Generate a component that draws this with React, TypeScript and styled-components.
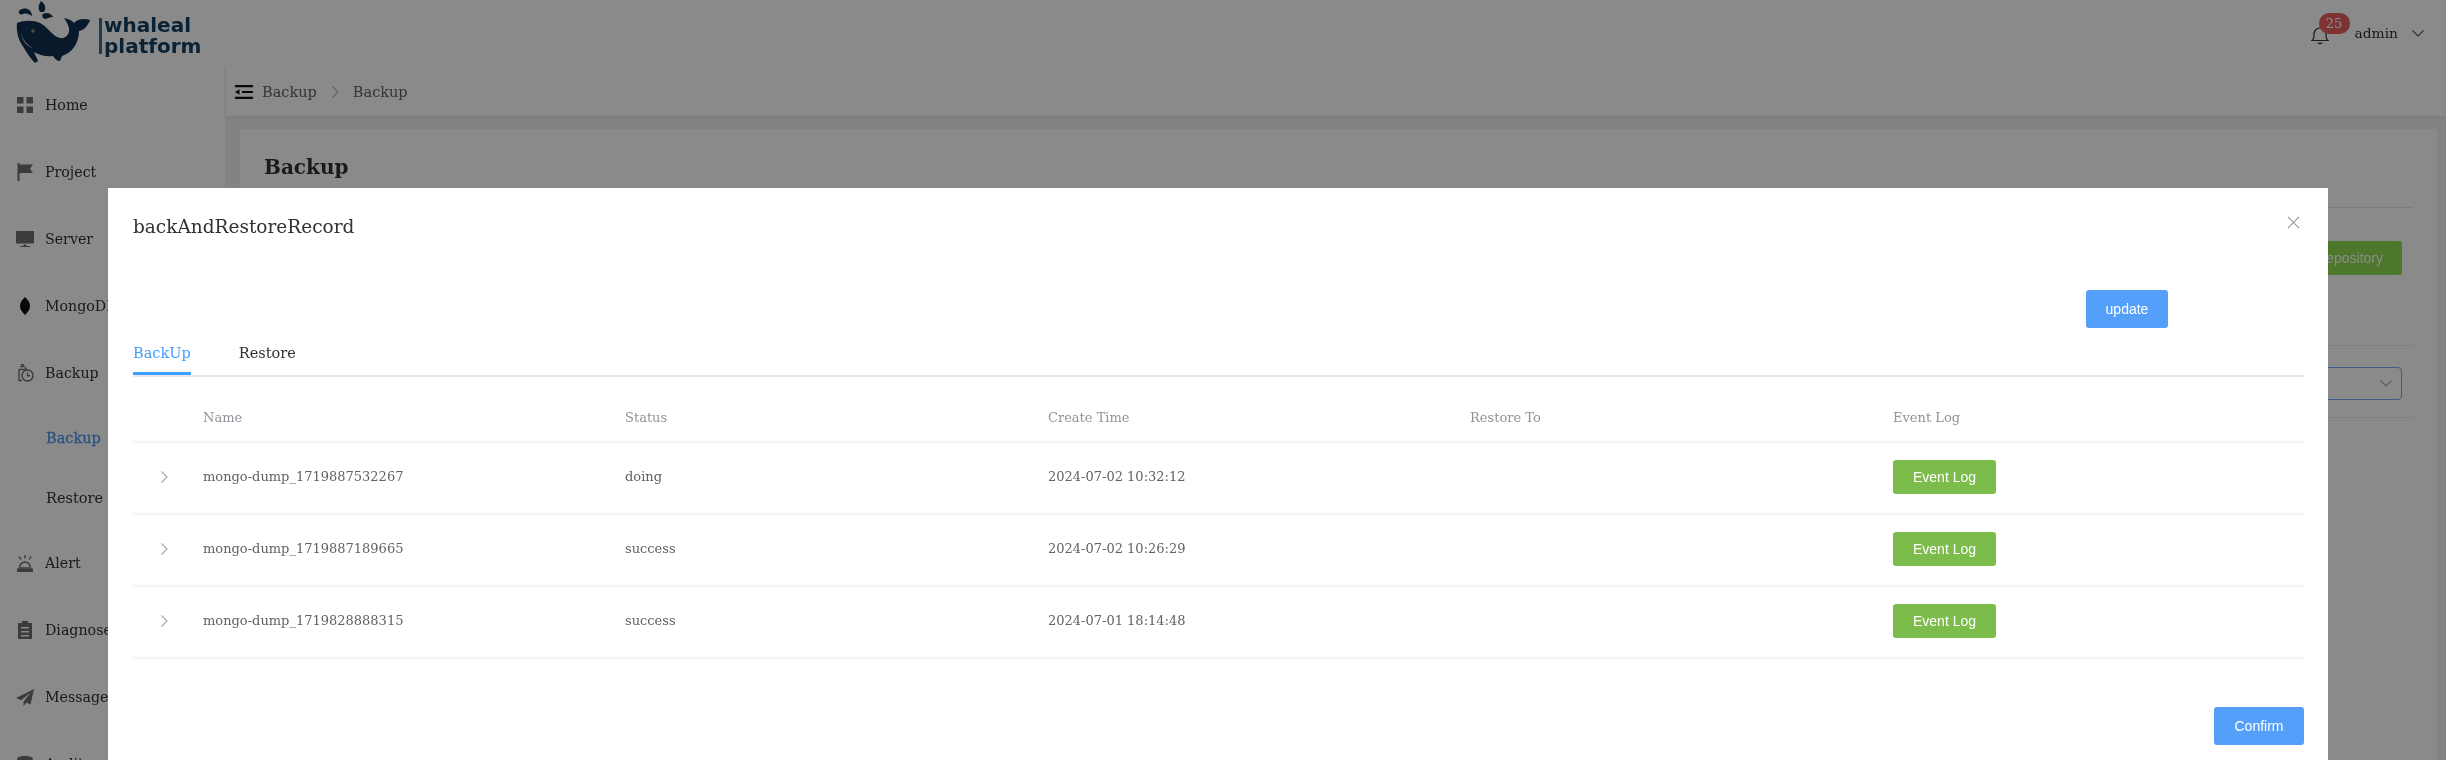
import styled, { createGlobalStyle } from "styled-components";
import type { ReactNode } from "react";

const GlobalStyle = createGlobalStyle`
  html, body {
    margin: 0;
    padding: 0;
    background: #fff;
  }
  * {
    box-sizing: border-box;
  }
`;

const serif = `"DejaVu Serif", "Liberation Serif", serif`;
const sans = `"Liberation Sans", Arial, sans-serif`;

const Page = styled.div`
  position: relative;
  width: 2446px;
  height: 760px;
  overflow: hidden;
  font-family: ${serif};
  color: #303133;
  background: #fff;
  filter: blur(0.55px);
`;

const Header = styled.header`
  height: 66px;
  display: flex;
  align-items: center;
  justify-content: space-between;
  padding: 0 21px 0 14px;
`;

const Brand = styled.div`
  display: flex;
  align-items: center;
  height: 66px;
`;

const BrandDivider = styled.div`
  width: 3px;
  height: 36px;
  margin: 6px 2px 0 7px;
  background: #3a6d8c;
`;

const BrandName = styled.div`
  font-family: "DejaVu Sans", sans-serif;
  font-weight: 700;
  font-size: 20px;
  line-height: 21px;
  color: #123f63;
  margin-top: 5px;
`;

const UserBox = styled.div`
  display: flex;
  align-items: center;
  color: #303133;
`;

const BellWrap = styled.div`
  position: relative;
  width: 32px;
  height: 24px;
  margin-top: 8px;
`;

const Badge = styled.span`
  position: absolute;
  left: 8px;
  top: -12px;
  width: 31px;
  height: 21px;
  border-radius: 10px;
  background: #e85f5f;
  color: #fff;
  font-size: 13px;
  line-height: 21px;
  text-align: center;
`;

const UserName = styled.span`
  margin: 0 13px 0 12px;
  font-size: 13.8px;
`;

const Body = styled.div`
  display: flex;
  height: 694px;
`;

const Sidebar = styled.nav`
  width: 226px;
  flex: none;
  padding-top: 5px;
  border-right: 1px solid #eee;
`;

const NavItem = styled.div`
  display: flex;
  align-items: center;
  height: 67px;
  padding-left: 16px;
  gap: 11px;
  font-size: 14.2px;
  white-space: nowrap;
  color: #303133;
`;

const SubGroup = styled.div`
  padding: 2px 0 1px;
`;

const SubItem = styled.div<{ $active?: boolean }>`
  display: flex;
  align-items: center;
  height: 60px;
  padding-left: 46px;
  font-size: 14.5px;
  color: ${(p) => (p.$active ? "#4f93f0" : "#303133")};
  -webkit-text-stroke: ${(p) => (p.$active ? "0.3px" : "0")};
`;

const Main = styled.main`
  flex: 1;
  display: flex;
  flex-direction: column;
  background: #f0f2f5;
`;

const Crumbs = styled.div`
  height: 50px;
  display: flex;
  align-items: center;
  padding: 2px 0 0 9px;
  gap: 9px;
  background: #fff;
  font-size: 14.5px;
  color: #606266;
  box-shadow: 0 1px 4px rgba(0, 21, 41, 0.08);
`;

const CrumbSep = styled.span`
  display: flex;
  margin: 0 2px;
`;

const Card = styled.section`
  flex: 1;
  margin: 13px 9px 0 14px;
  padding: 0 24px 0 24px;
  background: #fff;
  border-radius: 3px;
`;

const CardTitle = styled.h2`
  height: 79px;
  margin: 0;
  padding-top: 26px;
  font-size: 20px;
  font-weight: 700;
  border-bottom: 1px solid #e4e7ed;
  color: #303133;
`;

const CardRow = styled.div`
  display: flex;
  justify-content: flex-end;
  align-items: center;
  padding-right: 11px;
  height: 138px;
  border-bottom: 1px solid #ebeef5;
`;

const CardRowSmall = styled(CardRow)`
  height: 72px;
  padding-top: 3px;
`;

const RepoButton = styled.button`
  width: 190px;
  height: 34px;
  margin-top: -38px;
  border: none;
  border-radius: 3px;
  background: #8fdc50;
  color: #fff;
  font-family: ${sans};
  font-size: 14px;
  text-align: right;
  padding-right: 19px;
`;

const SelectBox = styled.div`
  width: 300px;
  height: 33px;
  border: 1px solid #6fa8f5;
  border-radius: 4px;
  display: flex;
  align-items: center;
  justify-content: flex-end;
  padding-right: 8px;
`;

const Mask = styled.div`
  position: absolute;
  inset: 0;
  background: rgba(0, 0, 0, 0.46);
`;

const Modal = styled.div`
  position: absolute;
  left: 108px;
  top: 188px;
  width: 2220px;
  height: 640px;
  background: #fff;
  padding: 0 24px 0 25px;
`;

const ModalHeader = styled.div`
  height: 76px;
  display: flex;
  align-items: center;
  justify-content: space-between;
  font-size: 18.5px;
  color: #303133;
  padding-right: 4px;
`;

const CloseIcon = styled.svg`
  margin-top: -8px;
  width: 13px;
  height: 13px;
`;

const UpdateRow = styled.div`
  display: flex;
  justify-content: flex-end;
  padding: 26px 136px 0 0;
`;

const ActionButton = styled.button<{ $width: number; $height: number; $color: string }>`
  width: ${(p) => p.$width}px;
  height: ${(p) => p.$height}px;
  padding: 0;
  border: none;
  border-radius: 3px;
  background: ${(p) => p.$color};
  color: #fff;
  font-family: ${sans};
  font-size: 14px;
`;

const Tabs = styled.div`
  height: 49px;
  display: flex;
  align-items: center;
  gap: 48px;
  border-bottom: 2px solid #e4e7ed;
  font-size: 14.5px;
`;

const Tab = styled.div<{ $active?: boolean }>`
  position: relative;
  margin-top: 2px;
  color: ${(p) => (p.$active ? "#409eff" : "#303133")};

  &::after {
    content: "";
    display: ${(p) => (p.$active ? "block" : "none")};
    position: absolute;
    left: 0;
    right: 0;
    bottom: -14px;
    height: 3px;
    background: #409eff;
  }
`;

const tableColumns = "70px 422px 423px 422px 423px 1fr";

const HeadRow = styled.div`
  display: grid;
  grid-template-columns: ${tableColumns};
  align-items: center;
  height: 66px;
  padding-top: 16px;
  border-bottom: 2px solid #f3f4f8;
  font-size: 13px;
  color: #909399;
`;

const BodyRow = styled.div`
  display: grid;
  grid-template-columns: ${tableColumns};
  align-items: center;
  height: 72px;
  padding-bottom: 3px;
  border-bottom: 2px solid #f3f4f8;
  font-size: 13px;
  color: #606266;
`;

const ExpandCell = styled.div`
  display: flex;
  justify-content: center;
  padding-right: 9px;
`;

const ModalFooter = styled.div`
  display: flex;
  justify-content: flex-end;
  padding-top: 48px;
`;

const Glyph = styled.svg`
  width: 18px;
  height: 18px;
  flex: none;
  fill: #6d6e70;
`;

const icons: Record<string, ReactNode> = {
  home: (
    <path d="M1 1h6.500v6.500H1zM10.500 1H17v6.500h-6.500zM1 10.500h6.500V17H1zM10.500 10.500H17V17h-6.500z" />
  ),
  project: <path d="M1.500 0h2v18h-2zM3.500 1.500H17l-3 4.200 3 4.300H3.500z" />,
  server: (
    <path d="M0 1h18v12.500H0zM7.500 14.500h3V16H14v1H4v-1h3.500z" />
  ),
  mongo: (
    <path
      d="M9 0c3 3 5 5.500 5 9s-2 6-5 9c-3-3-5-5.500-5-9s2-6 5-9z"
      fill="#101010"
    />
  ),
  backup: (
    <g fill="none" stroke="#6d6e70" strokeWidth="1.400">
      <path d="M3 5.500h6l1.500-2M3 5.500v11h3M4 2.500h5M5 .8h3" />
      <circle cx="11.500" cy="11.500" r="5.500" />
      <path d="M11.500 8.500v3.200h2.500" />
    </g>
  ),
  alert: (
    <g>
      <path d="M3.500 14a5.500 6 0 0 1 11 0z" fill="none" stroke="#6d6e70" strokeWidth="1.500" />
      <path d="M1 14.500h16V18H1z" />
      <path d="M8.300 1h1.400v3.500H8.300zM2.500 3l1-1 2 3-1 1zM15.500 3l-1-1-2 3 1 1z" />
    </g>
  ),
  diagnose: (
    <path d="M6 0h6v2h4v16H2V2h4zM5 6v1.600h8V6zM5 10v1.600h8V10zM5 14v1.600h8V14z" fillRule="evenodd" />
  ),
  message: <path d="M18 1 0 10l5 2.200L15 4.500 7.500 13.500V18l3-3.500 4 2z" />,
  audit: (
    <path d="M9 1c4.500 0 8 1.100 8 2.800S13.500 6.500 9 6.500 1 5.500 1 3.800 4.500 1 9 1zM1 6.500c2 1.500 14 1.500 16 0V10c-2 2-14 2-16 0z" />
  ),
};

function NavIcon({ name }: { name: string }) {
  return <Glyph viewBox="0 0 18 18">{icons[name]}</Glyph>;
}

function Chevron({ dir, color, size }: { dir: "right" | "down"; color: string; size: number }) {
  return (
    <svg width={size} height={size} viewBox="0 0 14 14" fill="none" stroke={color} strokeWidth="1.100">
      {dir === "right" ? <path d="M4.500 1.500 10 7l-5.500 5.500" /> : <path d="M1.500 4.500 7 10l5.500-5.500" />}
    </svg>
  );
}

function WhaleLogo() {
  return (
    <svg width="78" height="64" viewBox="0 0 78 64" fill="#0d2f4f">
      <path d="M3 22C10 19 20 19 26 22 34 26 38 35 46 37 52 38 56 33 55 27 54 23 52 20 50 17 54 18 58 19 60 22 63 18 70 17 76 19 74 25 70 29 65 30 65 42 58 52 48 55L46 60C43 60 41 58 39 55 32 56 25 54 20 51L24 60 21 62C17 58 13 52 10 47 5 40 2 32 3 22Z" />
      <path d="M27 0c3 2 5 5 4 9-1 3-5 3-6 0-1-3 0-6 2-9zM5 10c3-3 7-3 10-1 2 1 3 4 3 6-3-2-6-3-9-2-2 1-5 0-4-3zM29 13c3-2 8-1 10 3-3 0-5 1-7 2-3 0-5-3-3-5z" />
      <circle cx="19" cy="30" r="1.800" fill="#8a8a8a" />
      <path d="M7 32c2 7 6 12 12 15-6-1-11-7-12-15z" fill="#b8b8b8" />
    </svg>
  );
}

function MenuFold() {
  return (
    <svg width="18" height="16" viewBox="0 0 18 16" fill="#111">
      <path d="M0 1h18v2.200H0zM7 6.900h11v2.200H7zM0 12.800h18V15H0zM0 8l4.500-2.800v5.600z" />
    </svg>
  );
}

const navTop = [
  { icon: "home", label: "Home" },
  { icon: "project", label: "Project" },
  { icon: "server", label: "Server" },
  { icon: "mongo", label: "MongoDB" },
  { icon: "backup", label: "Backup" },
];

const navBottom = [
  { icon: "alert", label: "Alert" },
  { icon: "diagnose", label: "Diagnose" },
  { icon: "message", label: "Message" },
  { icon: "audit", label: "Audit" },
];

const records = [
  { name: "mongo-dump_1719887532267", status: "doing", time: "2024-07-02 10:32:12" },
  { name: "mongo-dump_1719887189665", status: "success", time: "2024-07-02 10:26:29" },
  { name: "mongo-dump_1719828888315", status: "success", time: "2024-07-01 18:14:48" },
];

export default function App() {
  return (
    <Page>
      <GlobalStyle />
      <Header>
        <Brand>
          <WhaleLogo />
          <BrandDivider />
          <BrandName>
            whaleal
            <br />
            platform
          </BrandName>
        </Brand>
        <UserBox>
          <BellWrap>
            <svg width="18" height="20" viewBox="0 0 18 20" fill="none" stroke="#333" strokeWidth="1.200">
              <path d="M1 15.500c2-1.500 2-3.500 2-6C3 5.500 5.500 3 9 3s6 2.500 6 6.500c0 2.500 0 4.500 2 6zM7 17.500c.5 1.500 3.500 1.500 4 0" />
            </svg>
            <Badge>25</Badge>
          </BellWrap>
          <UserName>admin</UserName>
          <Chevron dir="down" color="#555" size={14} />
        </UserBox>
      </Header>
      <Body>
        <Sidebar>
          {navTop.map((item) => (
            <NavItem key={item.label}>
              <NavIcon name={item.icon} />
              {item.label}
            </NavItem>
          ))}
          <SubGroup>
            <SubItem $active>Backup</SubItem>
            <SubItem>Restore</SubItem>
          </SubGroup>
          {navBottom.map((item) => (
            <NavItem key={item.label}>
              <NavIcon name={item.icon} />
              {item.label}
            </NavItem>
          ))}
        </Sidebar>
        <Main>
          <Crumbs>
            <MenuFold />
            Backup
            <CrumbSep>
              <Chevron dir="right" color="#b8bbc2" size={14} />
            </CrumbSep>
            Backup
          </Crumbs>
          <Card>
            <CardTitle>Backup</CardTitle>
            <CardRow>
              <RepoButton>Create Repository</RepoButton>
            </CardRow>
            <CardRowSmall>
              <SelectBox>
                <Chevron dir="down" color="#aaa" size={14} />
              </SelectBox>
            </CardRowSmall>
          </Card>
        </Main>
      </Body>
      <Mask />
      <Modal>
        <ModalHeader>
          backAndRestoreRecord
          <CloseIcon viewBox="0 0 14 14" fill="none" stroke="#909399" strokeWidth="1.100">
            <path d="M1 1l12 12M13 1 1 13" />
          </CloseIcon>
        </ModalHeader>
        <UpdateRow>
          <ActionButton $width={82} $height={38} $color="#549ff9">
            update
          </ActionButton>
        </UpdateRow>
        <Tabs>
          <Tab $active>BackUp</Tab>
          <Tab>Restore</Tab>
        </Tabs>
        <HeadRow>
          <span />
          <span>Name</span>
          <span>Status</span>
          <span>Create Time</span>
          <span>Restore To</span>
          <span>Event Log</span>
        </HeadRow>
        {records.map((record) => (
          <BodyRow key={record.name}>
            <ExpandCell>
              <Chevron dir="right" color="#a4a6ab" size={14} />
            </ExpandCell>
            <span>{record.name}</span>
            <span>{record.status}</span>
            <span>{record.time}</span>
            <span />
            <span>
              <ActionButton $width={103} $height={34} $color="#7cbc4b">
                Event Log
              </ActionButton>
            </span>
          </BodyRow>
        ))}
        <ModalFooter>
          <ActionButton $width={90} $height={38} $color="#549ff9">
            Confirm
          </ActionButton>
        </ModalFooter>
      </Modal>
    </Page>
  );
}
